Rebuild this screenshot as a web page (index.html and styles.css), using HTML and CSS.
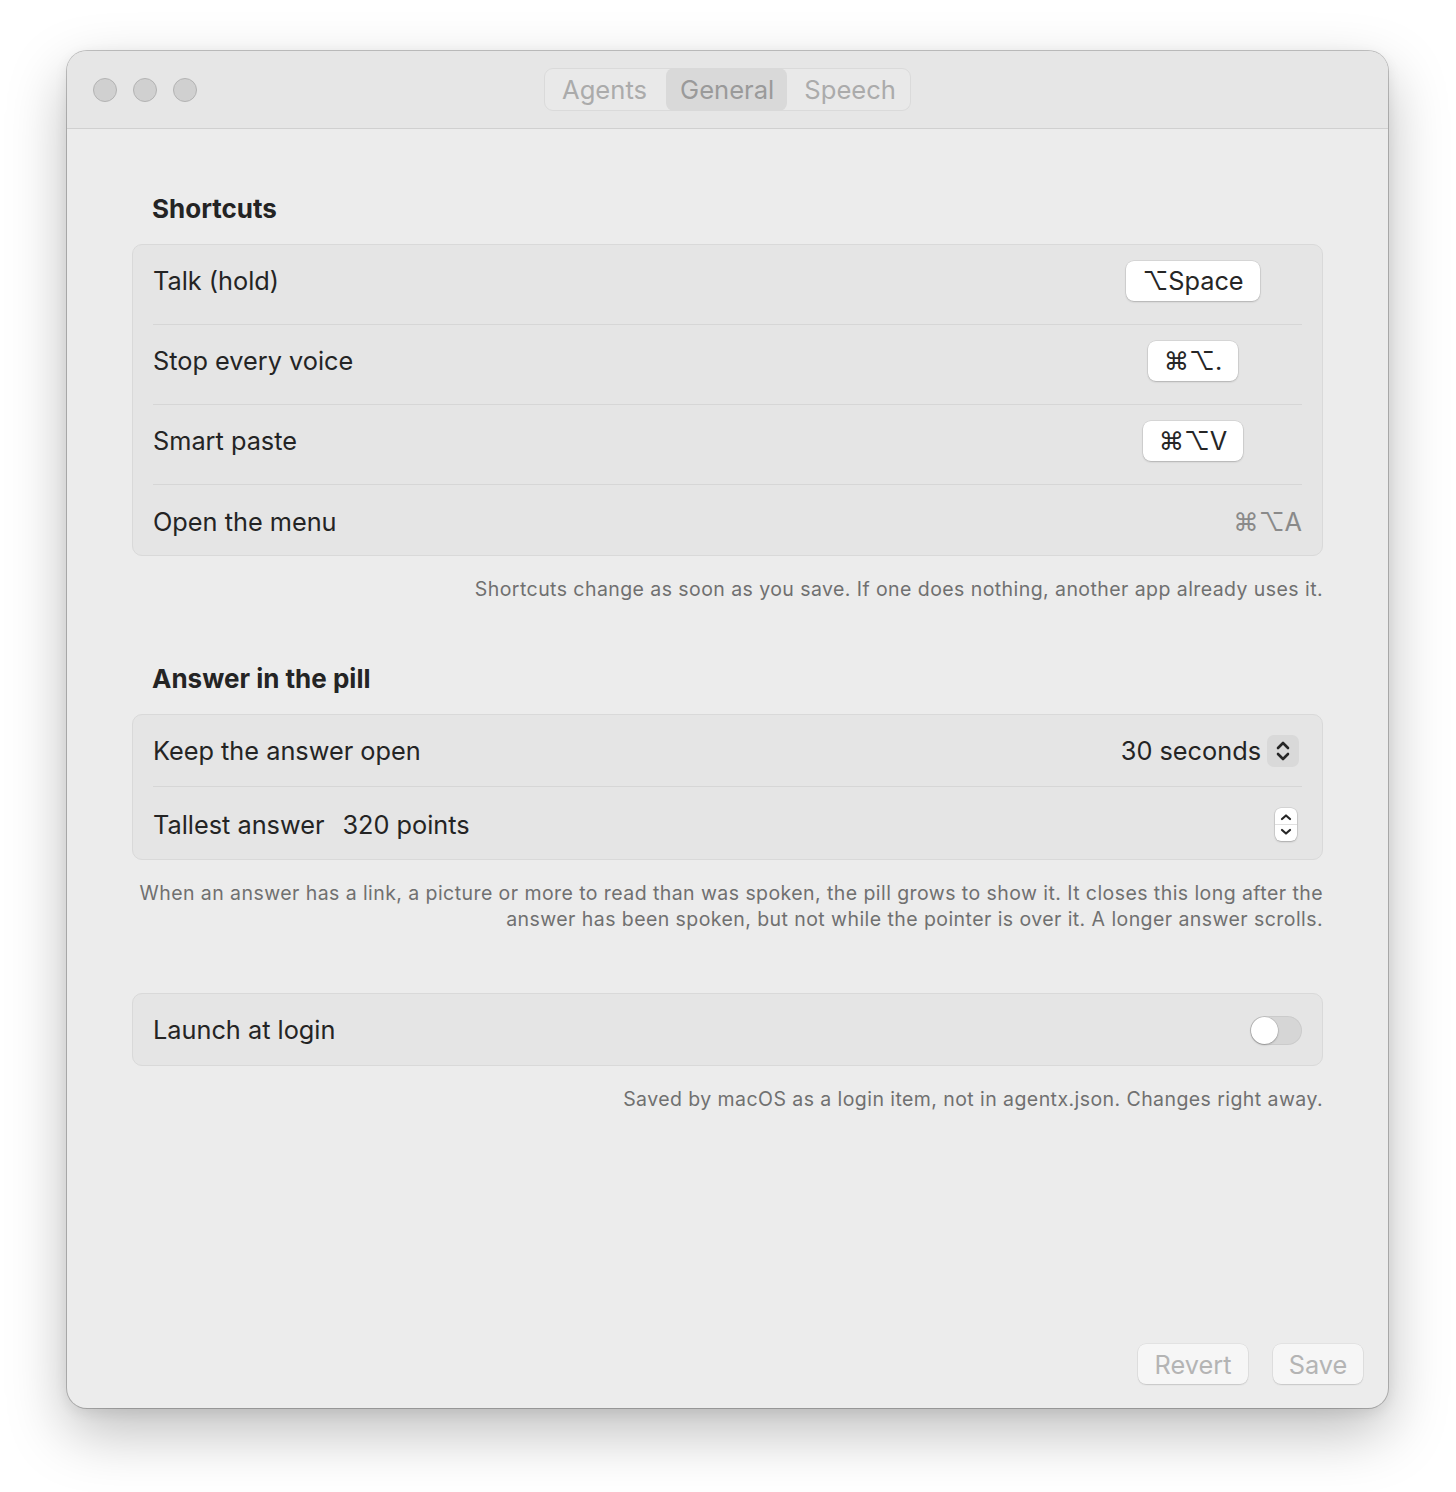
FILE: index.html
```html
<!DOCTYPE html>
<html lang="en">
<head>
<meta charset="utf-8">
<title>Settings</title>
<link rel="stylesheet" href="styles.css">
</head>
<body>
<div class="stage">
  <div class="window">
    <header class="titlebar">
      <div class="lights">
        <span class="light"></span><span class="light"></span><span class="light"></span>
      </div>
      <nav class="tabs">
        <span class="tab tab-first">Agents</span>
        <span class="tab selected">General</span>
        <span class="tab tab-last">Speech</span>
      </nav>
      <div></div>
    </header>

    <main class="content">
      <section class="section">
        <h2 class="heading">Shortcuts</h2>
        <div class="card">
          <div class="row keyrow">
            <span class="label">Talk (hold)</span>
            <span class="keyslot"><span class="key">⌥Space</span></span>
          </div>
          <div class="row keyrow">
            <span class="label">Stop every voice</span>
            <span class="keyslot"><span class="key">⌘⌥.</span></span>
          </div>
          <div class="row keyrow">
            <span class="label">Smart paste</span>
            <span class="keyslot"><span class="key">⌘⌥V</span></span>
          </div>
          <div class="row lastrow">
            <span class="label">Open the menu</span>
            <span class="plainkey">⌘⌥A</span>
          </div>
        </div>
        <p class="note">Shortcuts change as soon as you save. If one does nothing, another app already uses it.</p>
      </section>

      <section class="section">
        <h2 class="heading">Answer in the pill</h2>
        <div class="card">
          <div class="row row1">
            <span class="label">Keep the answer open</span>
            <span class="popup">
              <span class="popup-value">30 seconds</span>
              <span class="popup-arrows">
                <svg width="32" height="32" viewBox="0 0 32 32" aria-hidden="true">
                  <path d="M11 13 L16 8 L21 13" fill="none" stroke="#262626" stroke-width="2.6" stroke-linecap="round" stroke-linejoin="round"/>
                  <path d="M11 19 L16 24 L21 19" fill="none" stroke="#262626" stroke-width="2.6" stroke-linecap="round" stroke-linejoin="round"/>
                </svg>
              </span>
            </span>
          </div>
          <div class="row row2">
            <span class="label">Tallest answer<span class="value">320 points</span></span>
            <span class="stepper">
              <svg width="22" height="33" viewBox="0 0 22 33" aria-hidden="true">
                <path d="M7 11 L11 7.5 L15 11" fill="none" stroke="#262626" stroke-width="2.2" stroke-linecap="round" stroke-linejoin="round"/>
                <line x1="0" y1="16.5" x2="22" y2="16.5" stroke="#e0e0e0" stroke-width="1"/>
                <path d="M7 22 L11 25.5 L15 22" fill="none" stroke="#262626" stroke-width="2.2" stroke-linecap="round" stroke-linejoin="round"/>
              </svg>
            </span>
          </div>
        </div>
        <p class="note">When an answer has a link, a picture or more to read than was spoken, the pill grows to show it. It closes this long after the<br>answer has been spoken, but not while the pointer is over it. A longer answer scrolls.</p>
      </section>

      <section class="section">
        <div class="card">
          <div class="row row1">
            <span class="label">Launch at login</span>
            <span class="toggle"><span class="knob"></span></span>
          </div>
        </div>
        <p class="note">Saved by macOS as a login item, not in agentx.json. Changes right away.</p>
      </section>

      <footer class="actions">
        <button class="btn btn-revert" type="button">Revert</button>
        <button class="btn btn-save" type="button">Save</button>
      </footer>
    </main>
  </div>
</div>
</body>
</html>
```

FILE: styles.css
```css
* { box-sizing: border-box; }

html, body {
  margin: 0;
  padding: 0;
  background: #ffffff;
}

body {
  font-family: Inter, "Noto Sans", "DejaVu Sans", sans-serif;
  color: #242424;
  width: 1456px;
  height: 1492px;
  overflow: hidden;
}

.stage {
  padding: 51px 68px 0 67px;
}

.window {
  width: 1321px;
  height: 1357px;
  background: #ececec;
  border-radius: 20px;
  overflow: hidden;
  display: flex;
  flex-direction: column;
  box-shadow:
    0 0 0 1px rgba(0, 0, 0, 0.22),
    0 24px 60px rgba(0, 0, 0, 0.26),
    0 4px 14px rgba(0, 0, 0, 0.08);
}

/* ---------- title bar ---------- */
.titlebar {
  height: 78px;
  flex: none;
  background: #e6e6e6;
  border-bottom: 1px solid #d0d0d0;
  display: grid;
  grid-template-columns: 1fr auto 1fr;
  align-items: center;
}

.lights {
  display: flex;
  gap: 16px;
  padding-left: 26px;
}

.light {
  width: 24px;
  height: 24px;
  border-radius: 50%;
  background: #d0d0d0;
  border: 1px solid #b3b3b3;
}

.tabs {
  display: flex;
  height: 43px;
  border: 1px solid #dadada;
  background: #e9e9e9;
  border-radius: 9px;
}

.tab {
  font-size: 25.6px;
  line-height: 41px;
  color: #ababab;
}

.tab-first {
  padding: 0 19px 0 17px;
}

.tab-last {
  padding: 0 14px 0 17px;
}

.tab.selected {
  background: #d9d9d9;
  color: #9a9a9a;
  border-radius: 8px;
  padding: 0 13px 0 14px;
  margin: -1px 0;
  line-height: 43px;
}

/* ---------- content ---------- */
.content {
  flex: 1;
  display: flex;
  flex-direction: column;
  padding: 64px 65px 24px 65px;
}

.section + .section {
  margin-top: 61px;
}

.heading {
  margin: 0 0 19px 20px;
  font-size: 26px;
  line-height: 32px;
  font-weight: 700;
  color: #242424;
}

.card {
  background: #e5e5e5;
  border: 1px solid #d9d9d9;
  border-radius: 10px;
  padding: 0 20px;
}

.row {
  display: flex;
  align-items: center;
  justify-content: space-between;
  padding: 19px 0 20px;
  font-size: 25.3px;
  line-height: 32px;
  border-bottom: 1px solid #d6d6d6;
}

.row:last-child {
  border-bottom: none;
}

.keyrow {
  padding: 16px 0 23px;
}

.lastrow {
  padding: 21px 0 17px;
}

.row1 {
  padding: 20px 0 19px;
}

.row2 {
  padding: 21px 0 18px;
}

.label {
  color: #242424;
}

.value {
  margin-left: 18px;
}

.keyslot {
  width: 218px;
  display: flex;
  justify-content: center;
}

.key {
  display: inline-block;
  height: 40px;
  line-height: 40px;
  padding: 0 16px;
  background: #ffffff;
  border-radius: 8px;
  font-size: 25.3px;
  color: #262626;
  box-shadow: 0 0 0 0.5px rgba(0, 0, 0, 0.12), 0 1px 2px rgba(0, 0, 0, 0.18);
}

.plainkey {
  color: #8a8a8a;
}

/* popup */
.popup {
  display: flex;
  align-items: center;
  gap: 6px;
  margin-right: 3px;
}

.popup-value {
  color: #242424;
}

.popup-arrows {
  width: 32px;
  height: 32px;
  border-radius: 7px;
  background: #d9d9d9;
  display: flex;
}

/* stepper */
.stepper {
  width: 22px;
  height: 33px;
  margin-right: 5px;
  background: #ffffff;
  border-radius: 6px;
  display: flex;
  box-shadow: 0 0 0 0.5px rgba(0, 0, 0, 0.14), 0 1px 2px rgba(0, 0, 0, 0.2);
}

/* toggle */
.toggle {
  width: 52px;
  height: 29px;
  border-radius: 15px;
  background: #d6d6d6;
  box-shadow: inset 0 0 0 1px rgba(0, 0, 0, 0.05);
  display: flex;
  align-items: center;
  padding: 0 1px;
}

.knob {
  width: 27px;
  height: 27px;
  border-radius: 50%;
  background: #ffffff;
  box-shadow: 0 0 0 0.5px rgba(0, 0, 0, 0.12), 0 1px 2px rgba(0, 0, 0, 0.25);
}

.note {
  margin: 20px 0 0;
  text-align: right;
  font-size: 19.5px;
  line-height: 26px;
  letter-spacing: 0.43px;
  color: #707070;
}

/* ---------- actions ---------- */
.actions {
  margin-top: auto;
  margin-right: -40px;
  display: flex;
  justify-content: flex-end;
  gap: 25px;
}

.btn {
  height: 40px;
  border: none;
  border-radius: 8px;
  background: #f6f6f6;
  color: #b4b4b4;
  font-family: inherit;
  font-size: 25.3px;
  padding: 0;
  box-shadow: 0 0 0 0.5px rgba(0, 0, 0, 0.08), 0 1px 1.5px rgba(0, 0, 0, 0.12);
}

.btn-revert { width: 110px; }
.btn-save { width: 90px; }
```
